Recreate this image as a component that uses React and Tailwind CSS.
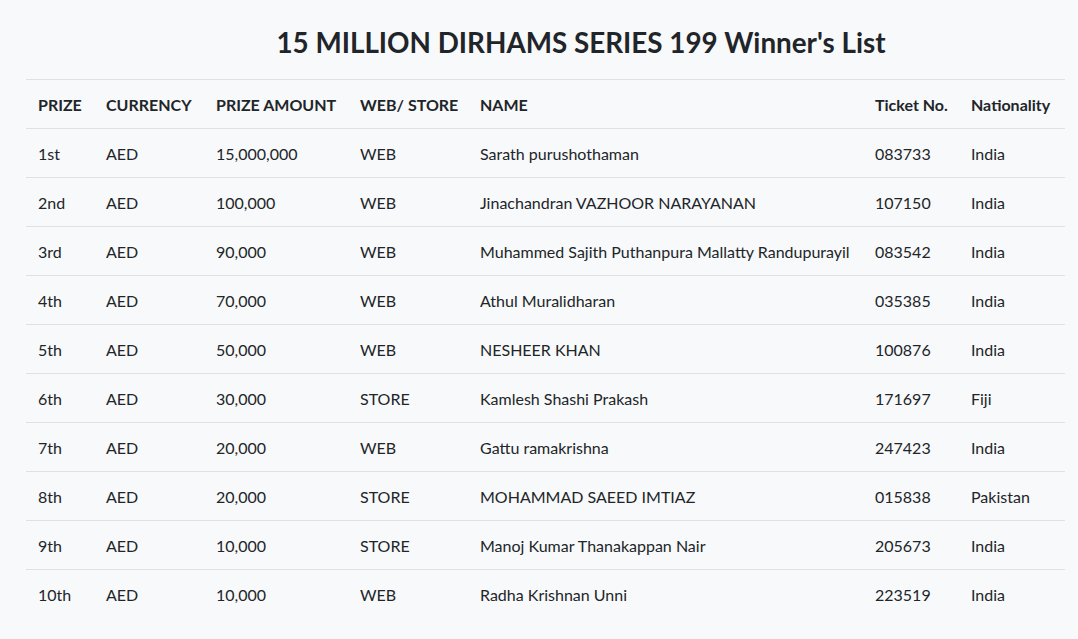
import React from 'react';

const winners = [
  ['1st', 'AED', '15,000,000', 'WEB', 'Sarath purushothaman', '083733', 'India'],
  ['2nd', 'AED', '100,000', 'WEB', 'Jinachandran VAZHOOR NARAYANAN', '107150', 'India'],
  ['3rd', 'AED', '90,000', 'WEB', 'Muhammed Sajith Puthanpura Mallatty Randupurayil', '083542', 'India'],
  ['4th', 'AED', '70,000', 'WEB', 'Athul Muralidharan', '035385', 'India'],
  ['5th', 'AED', '50,000', 'WEB', 'NESHEER KHAN', '100876', 'India'],
  ['6th', 'AED', '30,000', 'STORE', 'Kamlesh Shashi Prakash', '171697', 'Fiji'],
  ['7th', 'AED', '20,000', 'WEB', 'Gattu ramakrishna', '247423', 'India'],
  ['8th', 'AED', '20,000', 'STORE', 'MOHAMMAD SAEED IMTIAZ', '015838', 'Pakistan'],
  ['9th', 'AED', '10,000', 'STORE', 'Manoj Kumar Thanakappan Nair', '205673', 'India'],
  ['10th', 'AED', '10,000', 'WEB', 'Radha Krishnan Unni', '223519', 'India'],
];

const headers = ['PRIZE', 'CURRENCY', 'PRIZE AMOUNT', 'WEB/ STORE', 'NAME', 'Ticket No.', 'Nationality'];

export default function App() {
  return (
    <div
      className="min-h-screen bg-[#f8f9fa] text-[#212529] px-[26px] pt-[26px]"
      style={{ fontFamily: 'Lato, "Open Sans", sans-serif' }}
    >
      <h2 className="text-center pl-[84px] text-[27.8px] font-bold leading-[34px] mb-[19px] text-[#212529]">
        15 MILLION DIRHAMS SERIES 199 Winner's List
      </h2>
      <table className="w-[1039px] table-fixed border-collapse text-base leading-6">
        <colgroup>
          <col className="w-[68px]" />
          <col className="w-[110px]" />
          <col className="w-[144px]" />
          <col className="w-[120px]" />
          <col className="w-[395px]" />
          <col className="w-[96px]" />
          <col className="w-[106px]" />
        </colgroup>
        <thead>
          <tr className="border-t border-b border-[#dee2e6]">
            {headers.map((h) => (
              <th key={h} className="px-3 pt-[13px] pb-[11px] text-left font-bold whitespace-nowrap">
                {h}
              </th>
            ))}
          </tr>
        </thead>
        <tbody>
          {winners.map((row, i) => (
            <tr key={row[0]} className={i < winners.length - 1 ? 'border-b border-[#dee2e6]' : ''}>
              {row.map((cell, j) => (
                <td key={j} className="px-3 pt-[13px] pb-[11px] whitespace-nowrap">
                  {cell}
                </td>
              ))}
            </tr>
          ))}
        </tbody>
      </table>
    </div>
  );
}
